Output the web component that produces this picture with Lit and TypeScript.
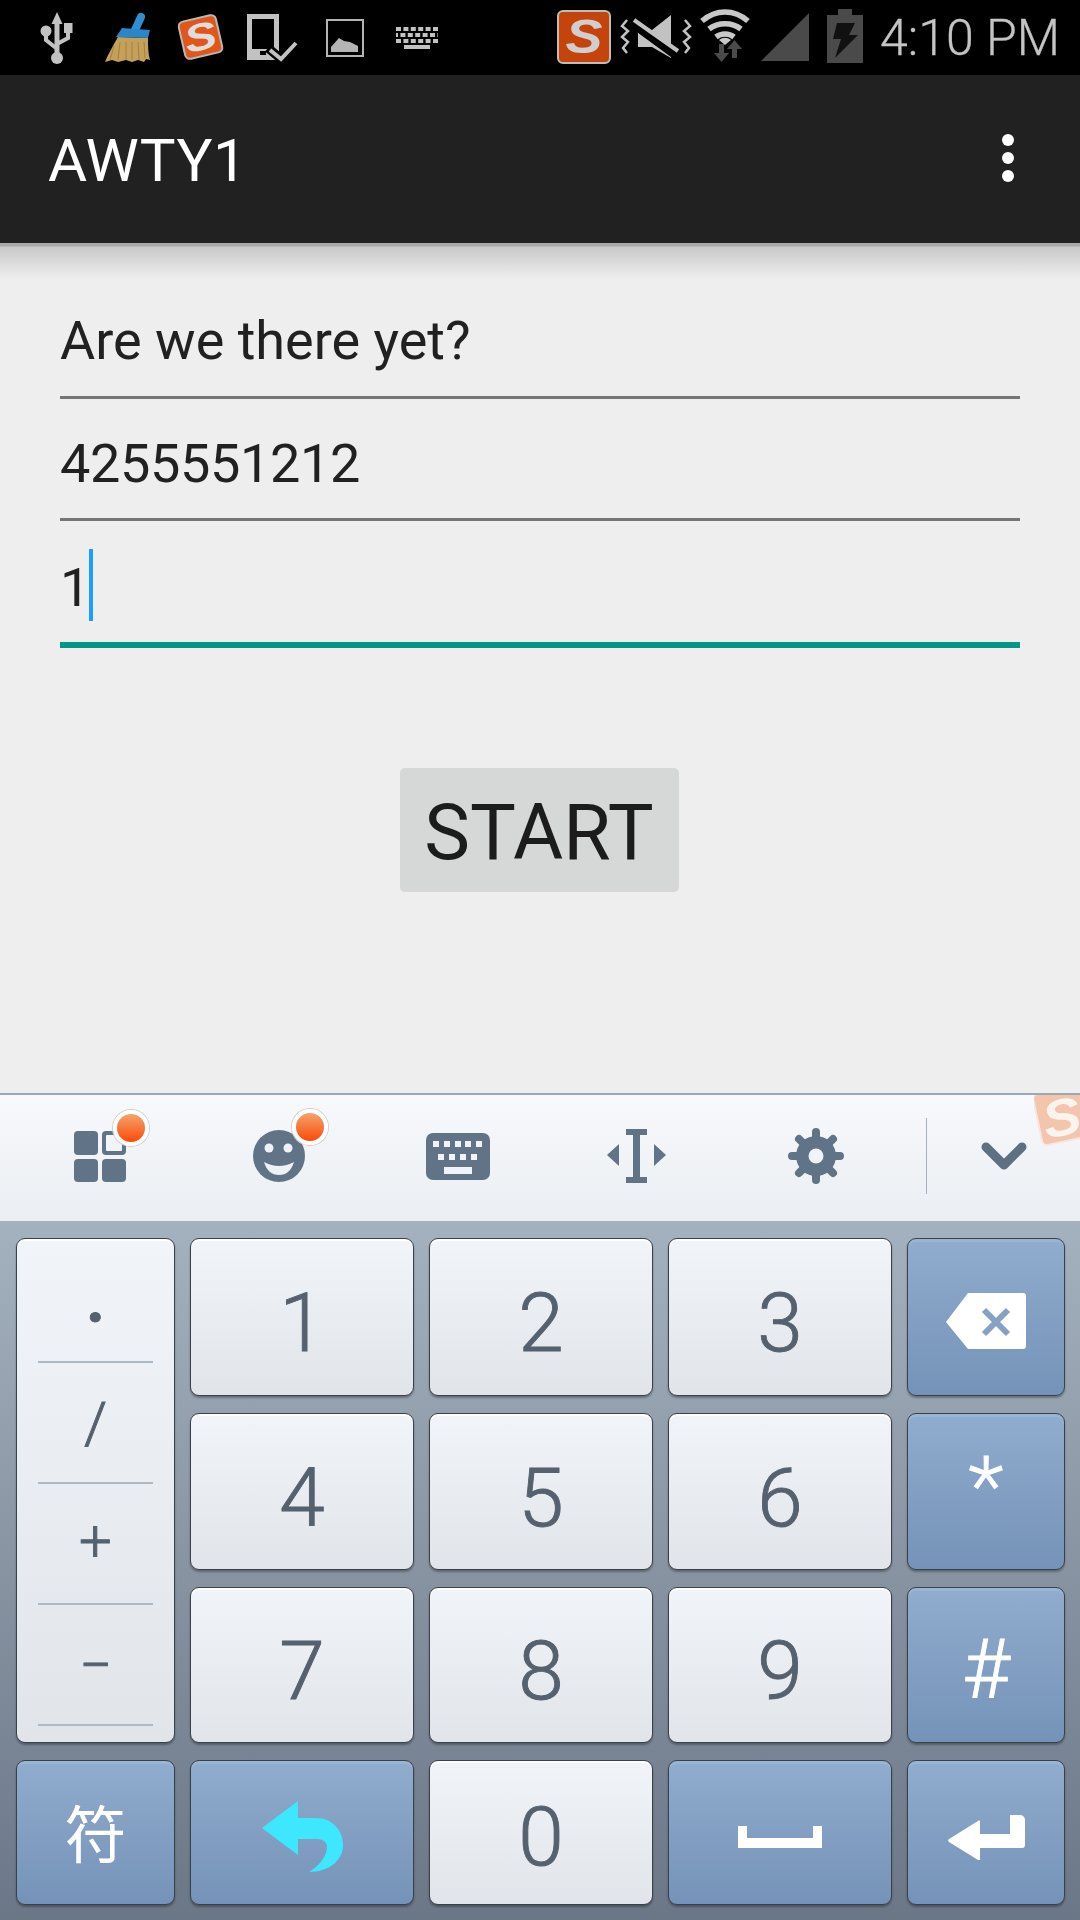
import { css, html, LitElement, svg } from "lit";
import { customElement } from "lit/decorators.js";
import { classMap } from "lit/directives/class-map.js";

interface Key {
  label?: string;
  icon?: "backspace" | "undo" | "space" | "enter";
  accent?: boolean;
  extra?: string;
}

const KEY_ROWS: Key[][] = [
  [{ label: "1" }, { label: "2" }, { label: "3" }, { icon: "backspace", accent: true }],
  [{ label: "4" }, { label: "5" }, { label: "6" }, { label: "*", accent: true, extra: "star" }],
  [{ label: "7" }, { label: "8" }, { label: "9" }, { label: "#", accent: true, extra: "hash" }],
];

const SYMBOLS = ["·", "/", "+", "−"];

const KEY_ICONS = {
  backspace: svg`<svg class="ico-backspace" viewBox="0 0 80 56">
    <path d="M22 0H77a3 3 0 0 1 3 3V53a3 3 0 0 1-3 3H22L0 29Z" fill="#fff" />
    <path d="M38 17L62 41M62 17L38 41" stroke="#85a2c5" stroke-width="6" />
  </svg>`,
  undo: svg`<svg class="ico-undo" viewBox="0 0 81 71">
    <path d="M36 0V17H54C70 17 81 29 81 44C81 60 66 71 47 71C58 64 65 55 65 46C65 42 62 38 55 38H36V54L0 27Z" fill="#3de8ff" />
  </svg>`,
  space: svg`<svg class="ico-space" viewBox="0 0 84 22">
    <path d="M0 0H9V12H75V0H84V22H0Z" fill="#fff" />
  </svg>`,
  enter: svg`<svg class="ico-enter" viewBox="0 0 77 45">
    <path d="M62 0H72a5 5 0 0 1 5 5V30a3 3 0 0 1-3 3H32V44a1 1 0 0 1-2 1L1 27a2 2 0 0 1 0-3L30 6a1 1 0 0 1 2 1V19H62Z" fill="#fff" />
  </svg>`,
};

@customElement("app-root")
export class AppRoot extends LitElement {
  static styles = css`
    :host {
      display: block;
      width: 1080px;
      height: 1920px;
      font-family: Roboto, "Noto Sans CJK SC", sans-serif;
      overflow: hidden;
    }
    .screen {
      height: 100%;
      display: flex;
      flex-direction: column;
      background: #eee;
    }

    /* status bar */
    .status {
      flex: none;
      height: 75px;
      background: #000;
      display: flex;
      align-items: center;
    }
    .status svg {
      flex: none;
      height: 75px;
    }
    .notif {
      width: 460px;
    }
    .sys {
      width: 340px;
      margin-left: 80px;
    }
    .time {
      font-size: 50px;
      font-weight: 300;
      color: #c4c4c4;
      white-space: nowrap;
      -webkit-text-stroke: 0.3px #c4c4c4;
    }
    .logo-letter {
      font-family: "Liberation Sans", sans-serif;
      font-weight: 700;
      font-style: italic;
    }

    /* action bar */
    .appbar {
      flex: none;
      height: 168px;
      background: #212121;
      display: flex;
      align-items: center;
      justify-content: space-between;
      padding: 0 66px 0 48px;
      box-sizing: border-box;
    }
    .title {
      font-size: 60px;
      color: #fff;
      font-weight: 400;
      letter-spacing: 0.5px;
      margin-top: 2px;
    }
    .overflow {
      display: flex;
      flex-direction: column;
      gap: 6px;
      margin-top: -2px;
    }
    .overflow span {
      width: 12px;
      height: 12px;
      border-radius: 50%;
      background: #fff;
    }

    /* form */
    .form {
      flex: 1;
      min-height: 0;
      display: flex;
      flex-direction: column;
      padding: 34px 60px 0;
      background: linear-gradient(#a9a9a9, #a9a9a9 3px, #c9c9c9 4px, #eee 36px) no-repeat top / 100% 40px, #eee;
    }
    .field {
      height: 122px;
      box-sizing: border-box;
      padding-top: 32px;
      border-bottom: 3px solid #757575;
      display: flex;
      align-items: flex-start;
      font-size: 54px;
      line-height: 64px;
      color: #212121;
    }
    .field.number {
      padding-top: 33px;
      letter-spacing: -0.35px;
    }
    .field.focused {
      height: 127px;
      padding-top: 35px;
      border-bottom: 6px solid #009688;
    }
    .caret {
      width: 4px;
      height: 72px;
      margin: -7px 0 0 -1px;
      background: #1a9fff;
    }
    .start {
      align-self: center;
      width: 279px;
      height: 124px;
      margin: 120px 2px 0 0;
      padding-top: 6px;
      box-sizing: border-box;
      background: #d6d7d7;
      border-radius: 5px;
      display: flex;
      align-items: center;
      justify-content: center;
      font-size: 77px;
      color: #1c1c1c;
    }

    /* keyboard toolbar */
    .toolbar {
      flex: none;
      position: relative;
      height: 128px;
      box-sizing: border-box;
      border-top: 2px solid #9aa8b8;
      padding: 0 0 4px 10px;
      display: flex;
      align-items: center;
      background: linear-gradient(#f7f9fc, #ebeef2);
      overflow: hidden;
    }
    .slot {
      position: relative;
      width: 179px;
      flex: none;
      display: flex;
      justify-content: center;
    }
    .badge {
      position: absolute;
      top: -21px;
      left: 103px;
      width: 28px;
      height: 28px;
      border-radius: 50%;
      background: linear-gradient(#f4a46e, #fb4a06);
      border: 4px solid #fff;
      box-shadow: 0 0 0 1px #cfcfcf;
    }
    .tool-divider {
      width: 1px;
      height: 76px;
      margin-left: 21px;
      background: #a4b0bd;
    }
    .chevron {
      margin-left: 54px;
      width: 46px;
      height: 28px;
    }
    .watermark {
      position: absolute;
      top: 0;
      right: 0;
      width: 46px;
      height: 52px;
    }

    /* keys */
    .keys {
      flex: none;
      height: 699px;
      box-sizing: border-box;
      display: grid;
      grid-template-columns: 159px 224px 224px 224px 158px;
      grid-template-rows: 158px 157px 156px 145px;
      column-gap: 15px;
      row-gap: 17px;
      padding: 17px 0 0 16px;
      background: linear-gradient(#a4b1be, #6b7686);
    }
    .key {
      box-sizing: border-box;
      display: flex;
      align-items: center;
      justify-content: center;
      padding-top: 12px;
      border: 1px solid #39414b;
      border-radius: 9px;
      background: linear-gradient(#f1f5f9, #e1e4e9);
      box-shadow: inset 0 2px 0 #fff, 0 2px 2px rgba(0, 0, 0, 0.3);
      color: #55616f;
      font-size: 82px;
      font-weight: 300;
      -webkit-text-stroke: 0.9px #55616f;
    }
    .key.accent {
      background: linear-gradient(#90acce, #7593b8);
      box-shadow: inset 0 3px 0 #9ab5d3, 0 2px 2px rgba(0, 0, 0, 0.3);
      color: #fff;
      -webkit-text-stroke: 0.9px #fff;
    }
    .key.bottom {
      padding-top: 8px;
    }
    .key.icon {
      padding-top: 0;
    }
    .key.star {
      padding: 0 0 12px;
    }
    .key.hash {
      padding-top: 7px;
    }
    .key.symbols {
      grid-row: span 3;
      flex-direction: column;
      align-items: stretch;
      justify-content: flex-start;
      padding: 0 21px;
    }
    .symbol {
      height: 121px;
      flex: none;
      box-sizing: border-box;
      border-bottom: 2px solid #aeb9c6;
      display: flex;
      align-items: center;
      justify-content: center;
      font-size: 58px;
    }
    .symbol:first-child {
      height: 124px;
      padding-top: 34px;
      font-weight: 700;
      font-size: 64px;
    }
    .symbol:nth-child(3) {
      padding-bottom: 6px;
    }
    .key.cjk {
      font-size: 62px;
      font-weight: 400;
      padding: 0 0 4px;
      -webkit-text-stroke: 0;
    }
    .ico-backspace {
      width: 80px;
      height: 56px;
      margin-top: 8px;
    }
    .ico-undo {
      width: 81px;
      height: 71px;
      margin-top: 8px;
    }
    .ico-space {
      width: 84px;
      height: 22px;
      margin-top: 8px;
    }
    .ico-enter {
      width: 77px;
      height: 45px;
      margin-top: 10px;
    }
  `;

  private notifIcons() {
    return html`<svg class="notif" viewBox="0 0 460 75">
      <g fill="#c2c2c2">
        <path d="M57 12L62.5 24H51.5Z" />
        <rect x="54.5" y="22" width="5" height="34" />
        <circle cx="57" cy="58" r="6" />
        <circle cx="46" cy="31" r="5.5" />
        <rect x="64" y="23" width="8.5" height="10" />
        <path d="M46 33V40L56 48" fill="none" stroke="#c2c2c2" stroke-width="4" />
        <path d="M68 31V38L57 44" fill="none" stroke="#c2c2c2" stroke-width="4" />
      </g>

      <path d="M118 37L148 38C148 46 148 54 150 60L146 59L144 62L138 60L132 62L126 60L118 62L112 60L105 62C108 54 113 46 118 37Z" fill="#c4a05a" />
      <path d="M114 46L110 60M120 42L118 60M126 42V60M132 42V60M138 42L139 60M144 42L145 58" stroke="#a5803f" stroke-width="1" />
      <path d="M141 17L135 30" stroke="#2f8fd2" stroke-width="8" stroke-linecap="round" />
      <path d="M122 28L150 30L148 38L116 37Z" fill="#2a86c8" />

      <g transform="rotate(-13 200.5 37)">
        <rect x="181.5" y="18" width="38" height="38" rx="5" fill="#e2561a" stroke="#b8b8b8" stroke-width="2" />
        <text class="logo-letter" x="200.5" y="50" font-size="38" text-anchor="middle" textLength="32" lengthAdjust="spacingAndGlyphs" fill="#dedede">S</text>
      </g>

      <path fill-rule="evenodd" d="M247 14H279V60H247ZM252 19V49H274V19ZM260 51V55H266V51Z" fill="#c2c2c2" />
      <path d="M268 48L281 59L296 42" fill="none" stroke="#000" stroke-width="9" />
      <path d="M270 50L281 59L296 43" fill="none" stroke="#c2c2c2" stroke-width="4" />

      <rect x="327" y="20" width="36" height="36" fill="none" stroke="#b4b4b4" stroke-width="2" />
      <path d="M331 52V47L339 38L344 41L350 42L358 46V52Z" fill="#b4b4b4" />

      <g fill="none" stroke="#c2c2c2" stroke-width="4">
        <path d="M396 29h42" stroke-dasharray="5 2.4" />
        <path d="M396 35h42" stroke-dasharray="5 2.4" stroke-dashoffset="3" />
        <path d="M396 41h42" stroke-dasharray="5 2.4" />
        <path d="M404 47h26" stroke-width="4" />
      </g>
    </svg>`;
  }

  private systemIcons() {
    // viewBox starts at the x this group has on the screen, 540
    return html`<svg class="sys" viewBox="540 0 340 75">
      <rect x="558" y="11" width="52" height="52" rx="5" fill="#c5440c" stroke="#bdbdbd" stroke-width="2" />
      <text class="logo-letter" x="584" y="53" font-size="48" text-anchor="middle" textLength="37" lengthAdjust="spacingAndGlyphs" fill="#cfcfcf">S</text>

      <path d="M627 20L622 26L628 31L622 37L628 42L623 48L627 53" fill="none" stroke="#c2c2c2" stroke-width="2.5" />
      <path d="M685 20L690 26L684 31L690 37L684 42L689 48L685 53" fill="none" stroke="#c2c2c2" stroke-width="2.5" />
      <path d="M671 15V58L652 47H638V30H652Z" fill="#c2c2c2" />
      <path d="M631 22L676 55" stroke="#000" stroke-width="9" />
      <path d="M634 20L678 51" stroke="#c2c2c2" stroke-width="4" />

      <g fill="none" stroke="#c8c8c8" stroke-width="5.5">
        <path d="M702 21C716 9 734 9 748 21" />
        <path d="M709 29C718 22 732 22 741 29" />
        <path d="M716 37C721 33 729 33 734 37" />
      </g>
      <path d="M719 40C723 37 727 37 731 40L725 45Z" fill="#c8c8c8" />
      <path d="M719 44H724V53H729L721.5 62L714 53H719Z" fill="#4a4a4a" />
      <path d="M734.5 40L742 49H737V58H732V49H727Z" fill="#4a4a4a" />

      <path d="M761 61L809 13V61Z" fill="#4a4a4a" />

      <path d="M838 9H852V15H863V63H827V15H838Z" fill="#4a4a4a" />
      <path d="M837 23H855L849 35H858L835 58L841 39H833Z" fill="#111" />
    </svg>`;
  }

  private renderKey(key: Key) {
    const classes = classMap({
      key: true,
      accent: !!key.accent,
      icon: !!key.icon,
      [key.extra ?? "plain"]: true,
    });
    return html`<div class=${classes}>${key.icon ? KEY_ICONS[key.icon] : key.label}</div>`;
  }

  protected render() {
    return html`<div class="screen">
      <div class="status">
        ${this.notifIcons()} ${this.systemIcons()}
        <span class="time">4:10 PM</span>
      </div>

      <div class="appbar">
        <span class="title">AWTY1</span>
        <div class="overflow"><span></span><span></span><span></span></div>
      </div>

      <div class="form">
        <div class="field">Are we there yet?</div>
        <div class="field number">4255551212</div>
        <div class="field focused">1<span class="caret"></span></div>
        <div class="start">START</div>
      </div>

      <div class="toolbar">
        <div class="slot">
          <svg width="52" height="51" viewBox="0 0 52 51" fill="#617386">
            <rect width="24" height="24" rx="4" />
            <rect x="28" width="24" height="24" rx="4" />
            <rect x="32" y="4" width="16" height="16" rx="1" fill="#f1f4f8" />
            <rect y="28" width="24" height="23" rx="4" />
            <rect x="28" y="28" width="24" height="23" rx="4" />
          </svg>
          <span class="badge"></span>
        </div>
        <div class="slot">
          <svg width="52" height="52" viewBox="-26 -26 52 52">
            <circle r="26" fill="#617386" />
            <circle cx="-10" cy="-8" r="4.5" fill="#eef1f5" />
            <circle cx="9" cy="-8" r="4.5" fill="#eef1f5" />
            <path d="M-15 6Q0 14 15 6Q11 19 0 19Q-11 19-15 6Z" fill="#eef1f5" />
          </svg>
          <span class="badge"></span>
        </div>
        <div class="slot">
          <svg width="64" height="47" viewBox="0 0 64 47">
            <rect width="64" height="47" rx="7" fill="#617386" />
            <g fill="#f0f3f7">
              <rect x="7" y="8" width="6" height="6" />
              <rect x="18" y="8" width="6" height="6" />
              <rect x="29" y="8" width="6" height="6" />
              <rect x="39" y="8" width="6" height="6" />
              <rect x="50" y="8" width="6" height="6" />
              <rect x="12" y="21" width="6" height="6" />
              <rect x="23" y="21" width="6" height="6" />
              <rect x="34" y="21" width="6" height="6" />
              <rect x="45" y="21" width="6" height="6" />
              <rect x="18" y="34" width="28" height="7" />
            </g>
          </svg>
        </div>
        <div class="slot">
          <svg width="59" height="54" viewBox="0 0 59 54" fill="#617386">
            <path d="M19 0H40V6H33V48H40V54H19V48H26V6H19Z" />
            <path d="M12 15V37L0 26Z" />
            <path d="M47 15V37L59 26Z" />
          </svg>
        </div>
        <div class="slot">
          <svg width="56" height="56" viewBox="-28 -28 56 56">
            <g stroke="#617386" stroke-width="8" stroke-linecap="round">
              <path d="M0-24V24M-24 0H24M-17-17L17 17M-17 17L17-17" />
            </g>
            <circle r="20" fill="#617386" />
            <circle r="7.5" fill="#f0f3f7" />
          </svg>
        </div>
        <div class="tool-divider"></div>
        <svg class="chevron" viewBox="0 0 46 28">
          <path d="M5 5L23 23L41 5" fill="none" stroke="#5f7083" stroke-width="9" stroke-linecap="round" stroke-linejoin="round" />
        </svg>
        <svg class="watermark" viewBox="0 0 46 52">
          <g transform="rotate(-12 30 24)">
            <rect x="4" y="-6" width="70" height="52" rx="5" fill="#f3c5ad" stroke="#f8e6dc" stroke-width="2" />
            <text class="logo-letter" x="28" y="40" font-size="52" text-anchor="middle" textLength="38" lengthAdjust="spacingAndGlyphs" fill="#fbf3ee">S</text>
          </g>
        </svg>
      </div>

      <div class="keys">
        <div class="key symbols">
          ${SYMBOLS.map((s) => html`<div class="symbol">${s}</div>`)}
        </div>
        ${KEY_ROWS[0].map((k) => this.renderKey(k))}
        ${KEY_ROWS[1].map((k) => this.renderKey(k))}
        ${KEY_ROWS[2].map((k) => this.renderKey(k))}
        <div class="key accent cjk">符</div>
        <div class="key accent icon">${KEY_ICONS.undo}</div>
        <div class="key bottom">0</div>
        <div class="key accent icon">${KEY_ICONS.space}</div>
        <div class="key accent icon">${KEY_ICONS.enter}</div>
      </div>
    </div>`;
  }
}
